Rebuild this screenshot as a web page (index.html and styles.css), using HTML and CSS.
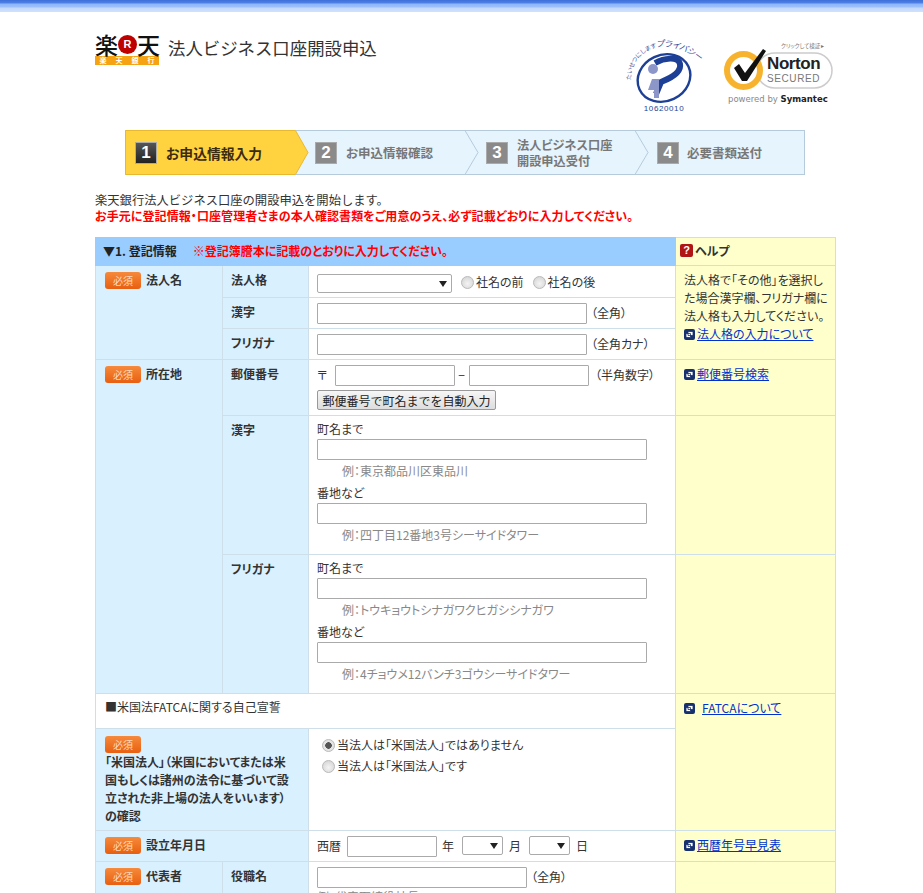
FILE: index.html
```html
<!DOCTYPE html>
<html lang="ja">
<head>
<meta charset="utf-8">
<title>法人ビジネス口座開設申込</title>
<link rel="stylesheet" href="styles.css">
</head>
<body>
<div class="page">
  <div class="topbar"></div>
  <header class="header">
    <div class="logo">
      <div class="logo-mark"><span class="logo-kanji">楽</span><span class="logo-r">R</span><span class="logo-kanji">天</span></div>
      <div class="logo-band"><span>楽</span><span>天</span><span>銀</span><span>行</span></div>
    </div>
    <h1 class="title">法人ビジネス口座開設申込</h1>
    <div class="seals">
      <svg class="seal-privacy" width="72" height="76" viewBox="0 0 72 76">
        <defs><path id="arc" d="M3 42 C3 12 38 -8 78 28"/></defs>
        <text class="privacy-arc"><textPath href="#arc">たいせつにします<tspan class="privacy-big">プライバシー</tspan></textPath></text>
        <ellipse cx="36" cy="40" rx="27" ry="23" fill="none" stroke="#1d3f96" stroke-width="2.4" transform="rotate(-25 36 40)"/>
        <path d="M27 25 C36 20 50 18 52 26 C54 36 38 42 33 44 L28 56" fill="none" stroke="#1d3f96" stroke-width="6"/>
        <circle cx="25" cy="31" r="5" fill="#8d96c9"/>
        <path d="M24 41 H31 V60 H26 V52 H20 Z" fill="#8d96c9"/>
        <text x="36" y="73" class="privacy-no">10620010</text>
      </svg>
      <svg class="seal-norton" width="110" height="66" viewBox="0 0 110 66">
        <text x="58" y="7" class="norton-click">クリックして検証 ▸</text>
        <rect x="34" y="12" width="75" height="35" rx="17.5" fill="#fff" stroke="#ccc" stroke-width="1.5"/>
        <circle cx="20.5" cy="29.5" r="16.5" fill="#fff" stroke="#f7b32d" stroke-width="6"/>
        <path d="M11 27 L16 23 L22 32 L40 8 L43 10 L24 40 L19 40 Z" fill="#111"/>
        <text x="44" y="28" class="norton-name">Norton</text>
        <text x="44" y="41" class="norton-sec">SECURED</text>
        <text x="5" y="61" class="norton-by">powered by <tspan class="norton-sym">Symantec</tspan></text>
      </svg>
    </div>
  </header>

  <div class="steps">
    <svg class="steps-bg" width="680" height="45" viewBox="0 0 680 45">
      <rect x="0.5" y="0.5" width="679" height="44" fill="#e6f4fd" stroke="#b5cbdc"/>
      <path d="M0.5 0.5 H170.5 L183 22.5 L170.5 44.5 H0.5 Z" fill="#ffd23f" stroke="#e8b92e"/>
      <path d="M340 0.5 L353 22.5 L340 44.5 M510 0.5 L523 22.5 L510 44.5" fill="none" stroke="#b5cbdc"/>
    </svg>
    <div class="step step-first"><span class="num num-on">1</span><span class="step-label step-label-on">お申込情報入力</span></div>
    <div class="step step-second"><span class="num">2</span><span class="step-label">お申込情報確認</span></div>
    <div class="step step-third"><span class="num">3</span><span class="step-label step-label-two">法人ビジネス口座<br>開設申込受付</span></div>
    <div class="step step-fourth"><span class="num">4</span><span class="step-label">必要書類送付</span></div>
  </div>

  <div class="intro">
    <p class="lead">楽天銀行法人ビジネス口座の開設申込を開始します。</p>
    <p class="warn warn-wide">お手元に登記情報・口座管理者さまの本人確認書類をご用意のうえ、必ず記載どおりに入力してください。</p>
  </div>

  <table class="form">
    <colgroup><col class="c1"><col class="c2"><col class="c3"><col class="c4"></colgroup>
    <tr class="r-head">
      <th colspan="3" class="head"><span class="head-title">▼1. 登記情報</span><span class="warn head-warn">※登記簿謄本に記載のとおりに入力してください。</span></th>
      <th class="help-head"><span class="q">?</span>ヘルプ</th>
    </tr>
    <tr class="r-32">
      <th rowspan="3" class="lab"><span class="req">必須</span>法人名</th>
      <th class="sub">法人格</th>
      <td class="val val-corp"><select class="sel-corp"><option></option></select><label class="rad"><input type="radio" name="a">社名の前</label><label class="rad"><input type="radio" name="a">社名の後</label></td>
      <td rowspan="3" class="help">法人格で「その他」を選択した場合漢字欄、フリガナ欄に法人格も入力してください。<br><a href="#"><svg class="ext" width="11" height="11" viewBox="0 0 11 11"><rect width="11" height="11" rx="2" fill="#16316e"/><path d="M4 2.5H9V6.5H4Z M2 4.5H6.5V8.5H2Z" fill="#fff" stroke="#16316e" stroke-width=".8"/></svg>法人格の入力について</a></td>
    </tr>
    <tr class="r-31">
      <th class="sub">漢字</th>
      <td class="val"><input class="in-m" type="text"><span class="note">（全角）</span></td>
    </tr>
    <tr class="r-31">
      <th class="sub">フリガナ</th>
      <td class="val"><input class="in-m" type="text"><span class="note">（全角カナ）</span></td>
    </tr>
    <tr class="r-56">
      <th rowspan="3" class="lab"><span class="req">必須</span>所在地</th>
      <th class="sub">郵便番号</th>
      <td class="val"><div class="zip">〒<input class="in-zip in-zip-a" type="text">−<input class="in-zip in-zip-b" type="text"><span class="note">（半角数字）</span></div><button class="btn" type="button">郵便番号で町名までを自動入力</button></td>
      <td class="help"><a href="#"><svg class="ext" width="11" height="11" viewBox="0 0 11 11"><rect width="11" height="11" rx="2" fill="#16316e"/><path d="M4 2.5H9V6.5H4Z M2 4.5H6.5V8.5H2Z" fill="#fff" stroke="#16316e" stroke-width=".8"/></svg>郵便番号検索</a></td>
    </tr>
    <tr class="r-139">
      <th class="sub">漢字</th>
      <td class="val val-addr">
        <div class="cap">町名まで</div><input class="in-l" type="text"><div class="hint">例：東京都品川区東品川</div>
        <div class="cap">番地など</div><input class="in-l" type="text"><div class="hint">例：四丁目12番地3号シーサイドタワー</div>
      </td>
      <td class="help"></td>
    </tr>
    <tr class="r-139">
      <th class="sub">フリガナ</th>
      <td class="val val-addr">
        <div class="cap">町名まで</div><input class="in-l" type="text"><div class="hint">例：トウキョウトシナガワクヒガシシナガワ</div>
        <div class="cap">番地など</div><input class="in-l" type="text"><div class="hint">例：4チョウメ12バンチ3ゴウシーサイドタワー</div>
      </td>
      <td class="help"></td>
    </tr>
    <tr class="r-35">
      <td colspan="3" class="fatca">■米国法FATCAに関する自己宣誓</td>
      <td rowspan="2" class="help"><a href="#"><svg class="ext ext-wide" width="11" height="11" viewBox="0 0 11 11"><rect width="11" height="11" rx="2" fill="#16316e"/><path d="M4 2.5H9V6.5H4Z M2 4.5H6.5V8.5H2Z" fill="#fff" stroke="#16316e" stroke-width=".8"/></svg>FATCAについて</a></td>
    </tr>
    <tr class="r-102">
      <th colspan="2" class="lab lab-wide"><span class="req req-block">必須</span>「米国法人」（米国においてまたは米<br>国もしくは諸州の法令に基づいて設<br>立された非上場の法人をいいます）<br>の確認</th>
      <td class="val val-radios"><label class="rad-line"><input type="radio" name="b" checked>当法人は「米国法人」ではありません</label><label class="rad-line"><input type="radio" name="b">当法人は「米国法人」です</label></td>
    </tr>
    <tr class="r-31">
      <th colspan="2" class="lab"><span class="req">必須</span>設立年月日</th>
      <td class="val date">西暦<input class="in-y" type="text">年<select class="sel-d"><option></option></select>月<select class="sel-d"><option></option></select>日</td>
      <td class="help"><a href="#"><svg class="ext" width="11" height="11" viewBox="0 0 11 11"><rect width="11" height="11" rx="2" fill="#16316e"/><path d="M4 2.5H9V6.5H4Z M2 4.5H6.5V8.5H2Z" fill="#fff" stroke="#16316e" stroke-width=".8"/></svg>西暦年号早見表</a></td>
    </tr>
    <tr class="r-56">
      <th class="lab"><span class="req">必須</span>代表者</th>
      <th class="sub">役職名</th>
      <td class="val"><input class="in-t" type="text"><span class="note">（全角）</span><div class="hint hint-flat">例：代表取締役社長</div></td>
      <td class="help"></td>
    </tr>
  </table>
</div>
</body>
</html>
```

FILE: styles.css
```css
* { box-sizing: border-box; }
html, body { margin: 0; padding: 0; background: #fff; }
body {
  font-family: "Noto Sans CJK JP", "Liberation Sans", sans-serif;
  font-size: 12px;
  color: #333;
  font-feature-settings: "palt";
}
.page { height: 893px; overflow: hidden; }
.topbar {
  height: 12px;
  background: linear-gradient(#3f6fd8 0, #4f80e6 3px, #8fb6fb 4px, #9cc0fc 7px, #c4dafc 8px, #cfe1fc 12px);
}

.header { display: flex; align-items: flex-start; height: 118px; padding: 21px 90px 0 95px; }
.logo { width: 64px; }
.logo-mark { display: flex; align-items: center; justify-content: space-between; height: 23px; }
.logo-kanji { font-size: 23px; line-height: 23px; color: #111; font-weight: 500; flex: none; }
.logo-r {
  flex: none; width: 19px; height: 19px; border-radius: 50%;
  background: #bf0000; color: #fff;
  font: bold 11px/19px "Liberation Sans", sans-serif; text-align: center;
}
.logo-band {
  display: flex; justify-content: space-around;
  height: 9px; background: #f6a313;
  color: #fff; font-size: 7px; line-height: 9px; font-weight: 700;
}
.title { margin: 3px 0 0 9px; font-size: 17.4px; line-height: 24px; font-weight: 400; color: #333; flex: 1; font-feature-settings: normal; }
.seals { display: flex; align-items: flex-start; gap: 23px; margin-top: 5px; }
.seal-privacy { overflow: visible; }
.seal-norton { margin-top: 3px; }
.privacy-arc { font-size: 6px; fill: #39509f; }
.privacy-big { font-size: 8.5px; font-style: italic; }
.privacy-no { font: 8px "Liberation Sans", sans-serif; fill: #1d3f96; text-anchor: middle; letter-spacing: .6px; }
.norton-click { font-size: 5.5px; fill: #777; }
.norton-name { font: bold 17px "Liberation Sans", sans-serif; fill: #222; letter-spacing: -.4px; }
.norton-sec { font: 10px "Liberation Sans", sans-serif; fill: #777; letter-spacing: .6px; }
.norton-by { font: 8.5px "DejaVu Sans", sans-serif; fill: #888; }
.norton-sym { fill: #222; font-weight: 700; }

.steps { position: relative; display: flex; width: 680px; height: 45px; margin-left: 125px; }
.steps-bg { position: absolute; left: 0; top: 0; }
.step { position: relative; display: flex; align-items: center; width: 170px; }
.step-first { padding-left: 10px; gap: 9px; }
.step-second { padding-left: 20px; gap: 9px; }
.step-third { padding-left: 21px; gap: 9px; }
.step-fourth { padding-left: 22px; gap: 8px; }
.num {
  width: 22px; height: 22px; flex: none;
  background: #8a8a8a; border: 1px solid #aaa; color: #fff;
  font: bold 17px/20px "Liberation Sans", sans-serif; text-align: center;
}
.num-on { background: linear-gradient(#555, #222); color: #fff; }
.step-label { font-size: 12.5px; font-weight: 700; color: #777; line-height: 16px; }
.step-label-on { font-size: 13.8px; color: #3a2c10; }
.step-label-two { font-size: 12.2px; }

.intro { margin: 18px 0 0 95px; height: 44px; }
.intro p { margin: 0; line-height: 15px; }
.lead { font-size: 12.3px; font-feature-settings: normal; }
.warn { color: #f00; font-weight: 700; }
.warn-wide { letter-spacing: .08px; }

.form { border-collapse: collapse; table-layout: fixed; width: 740px; margin-left: 95px; }
.c1 { width: 127px; } .c2 { width: 86px; } .c3 { width: 367px; } .c4 { width: 160px; }
.form th, .form td { border: 1px solid #cfdfe9; vertical-align: top; text-align: left; font-weight: 400; line-height: 20px; padding: 0; }
.r-head { height: 28px; }
.r-32 { height: 32px; } .r-31 { height: 31px; } .r-56 { height: 56px; } .r-139 { height: 139px; }
.r-35 { height: 35px; } .r-102 { height: 102px; }
.form .head { background: #99ccff; border-color: #99ccff; padding: 3px 7px 0; font-weight: 700; }
.head-title { color: #222; margin-right: 16px; }
.form .help-head { background: #ffffcc; padding: 3px 4px 0; font-weight: 700; }
.q {
  display: inline-block; width: 13px; height: 13px; border-radius: 2px; margin: 3px 2px 0 0;
  background: #b01414; color: #fff; font: bold 11px/13px "Liberation Sans", sans-serif; text-align: center; vertical-align: top;
}
.form .lab { background: #d9f0ff; padding: 4px 9px 0; font-weight: 700; color: #333; }
.form .sub { background: #d9f0ff; padding: 4px 8px 0; font-weight: 700; color: #333; }
.form .val { padding: 5px 8px 0; }
.form .help { background: #ffffcc; padding: 5px 4px 0 8px; line-height: 18px; }
.help a { color: #0033cc; }
.ext { vertical-align: -1px; margin-right: 2px; }
.ext-wide { margin-right: 7px; }
.req {
  display: inline-block; width: 36px; height: 17px; margin-right: 5px; border-radius: 3px;
  background: linear-gradient(#f68a3c, #e85f10); color: #ffd9bc;
  font-size: 10px; line-height: 17px; text-align: center; font-weight: 400; vertical-align: top; margin-top: 2px;
}
.req-block { display: block; margin: 2px 0 0; }
.form .lab-wide { line-height: 18px; padding-top: 5px; }

input[type="text"] { height: 21px; border: 1px solid #aaa; border-radius: 1px; background: #fff; padding: 0; vertical-align: top; }
.in-m { width: 270px; }
.in-zip { width: 120px; }
.in-zip-a { margin: 0 3px 0 8px; }
.in-zip-b { margin: 0 2px 0 4px; }
.in-l { width: 330px; display: block; }
.in-t { width: 210px; }
.in-y { width: 90px; margin: 0 5px 0 6px; }
.note { margin-left: 4px; }
select {
  appearance: none; height: 19px; vertical-align: top; border: 1px solid #aaa; border-radius: 2px;
  background: #fff url("data:image/svg+xml,%3Csvg xmlns='http://www.w3.org/2000/svg' width='8' height='6'%3E%3Cpath d='M0 0H8L4 6Z' fill='%23222'/%3E%3C/svg%3E") no-repeat right 4px center;
}
.sel-corp { width: 135px; margin-top: 3px; }
.sel-d { width: 41px; margin: 0 6px 0 8px; }
input[type="radio"] {
  appearance: none; width: 13px; height: 13px; margin: 0 2px 0 0; border-radius: 50%;
  border: 1px solid #bbb; background: radial-gradient(circle at 50% 60%, #f4f4f4, #cfcfcf);
  vertical-align: -2px;
}
input[type="radio"]:checked { background: radial-gradient(circle, #555 0 3px, #e4e4e4 3.5px); }
.rad { margin-left: 9px; line-height: 22px; }
.rad-line { display: block; line-height: 21px; }
.form .val-radios { padding: 5px 13px 0; }
.zip { height: 25px; }
.btn {
  display: block; width: 179px; height: 20px; padding: 0; font: 12px "Noto Sans CJK JP", sans-serif; color: #222;
  background: linear-gradient(#f6f6f6, #ddd); border: 1px solid #999; border-radius: 2px;
}
.form .val-addr { padding: 4px 8px 0; }
.cap { height: 19px; line-height: 17px; }
.hint { margin-left: 25px; color: #888; height: 24px; line-height: 21px; }
.hint-flat { margin: 0; line-height: 17px; }
.form .fatca { padding: 3px 9px 0; }
.date { white-space: nowrap; }
```
